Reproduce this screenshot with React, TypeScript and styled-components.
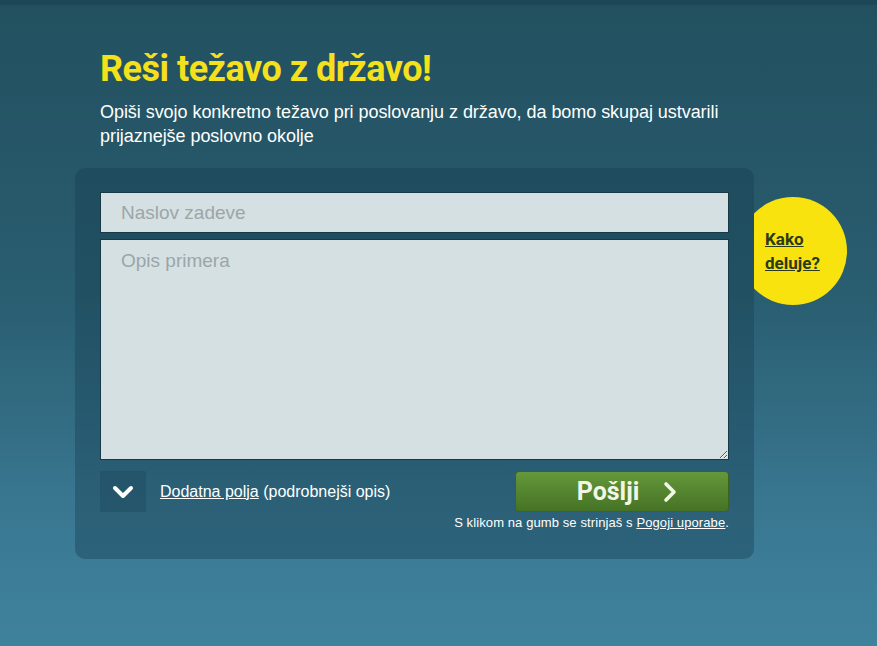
import React from "react";
import styled, { createGlobalStyle } from "styled-components";

const GlobalStyle = createGlobalStyle`
  html, body {
    margin: 0;
    padding: 0;
  }
  body {
    font-family: "Liberation Sans", Arial, sans-serif;
  }
`;

const ChevronDown = () => (
  <svg width="22" height="14" viewBox="0 0 22 14">
    <path
      d="M3 3 L11 11 L19 3"
      fill="none"
      stroke="#ffffff"
      strokeWidth="4"
      strokeLinecap="round"
      strokeLinejoin="round"
    />
  </svg>
);

const ChevronRight = () => (
  <svg width="14" height="22" viewBox="0 0 14 22">
    <path
      d="M3 3 L11 11 L3 19"
      fill="none"
      stroke="#f2f6e6"
      strokeWidth="3.6"
      strokeLinecap="round"
      strokeLinejoin="round"
    />
  </svg>
);

const App = () => {
  return (
    <>
      <GlobalStyle />
      <Page>
        <TopStrip />
        <Content>
          <Header>
            <Title>Reši težavo z državo!</Title>
            <Lead>
              Opiši svojo konkretno težavo pri poslovanju z državo, da bomo
              skupaj ustvarili prijaznejše poslovno okolje
            </Lead>
          </Header>
          <FormRow>
            <Panel>
              <TitleInput placeholder="Naslov zadeve" />
              <DescArea placeholder="Opis primera" />
              <Actions>
                <MoreFields>
                  <ToggleButton type="button">
                    <ChevronDown />
                  </ToggleButton>
                  <MoreText>
                    <a href="#">Dodatna polja</a> (podrobnejši opis)
                  </MoreText>
                </MoreFields>
                <SubmitBox>
                  <SubmitButton type="button">
                    Pošlji
                    <ChevronRight />
                  </SubmitButton>
                  <Terms>
                    S klikom na gumb se strinjaš s <a href="#">Pogoji uporabe</a>.
                  </Terms>
                </SubmitBox>
              </Actions>
            </Panel>
            <HelpBubble>
              <a href="#">
                Kako
                <br />
                deluje?
              </a>
            </HelpBubble>
          </FormRow>
        </Content>
      </Page>
    </>
  );
};

export default App;

const Page = styled.div`
  position: relative;
  width: 100%;
  min-height: 646px;
  overflow: hidden;
  background: linear-gradient(
    180deg,
    #22505f 0%,
    #295d70 45%,
    #3a7892 80%,
    #3f829c 100%
  );
`;

const TopStrip = styled.div`
  height: 5px;
  background: #1d4656;
`;

const Content = styled.div`
  padding: 41px 0 0 75px;
`;

const Header = styled.div`
  padding-left: 25px;
`;

const Title = styled.h1`
  margin: 0;
  color: #f4e11b;
  font-family: Roboto, "Liberation Sans", sans-serif;
  font-weight: 700;
  font-size: 36px;
  line-height: 46px;
  letter-spacing: -0.5px;
`;

const Lead = styled.p`
  margin: 8px 0 0;
  width: 640px;
  color: #ffffff;
  font-size: 18px;
  line-height: 24px;
  letter-spacing: -0.05px;
`;

const FormRow = styled.div`
  display: flex;
  align-items: flex-start;
  margin-top: 20px;
`;

const Panel = styled.div`
  box-sizing: border-box;
  width: 679px;
  height: 391px;
  padding: 24px 25px 0;
  border-radius: 10px;
  background: rgba(20, 60, 78, 0.38);
  display: flex;
  flex-direction: column;
`;

const fieldBase = `
  box-sizing: border-box;
  width: 100%;
  margin: 0;
  border: 1px solid #183a48;
  background: #d5e0e3;
  color: #333;
  font-family: "Liberation Sans", Arial, sans-serif;
  font-size: 19px;
  padding: 0 20px;
  outline: none;
  &::placeholder {
    color: #9ba6a9;
  }
`;

const TitleInput = styled.input`
  ${fieldBase}
  height: 41px;
`;

const DescArea = styled.textarea`
  ${fieldBase}
  height: 221px;
  margin-top: 6px;
  padding-top: 10px;
  resize: vertical;
  display: block;
`;

const Actions = styled.div`
  display: flex;
  justify-content: space-between;
  align-items: flex-start;
  margin-top: 11px;
`;

const MoreFields = styled.div`
  display: flex;
  align-items: center;
  gap: 14px;
`;

const ToggleButton = styled.button`
  width: 46px;
  height: 41px;
  border: 0;
  padding: 0;
  border-radius: 2px;
  background: rgba(20, 60, 78, 0.28);
  display: flex;
  align-items: center;
  justify-content: center;
  cursor: pointer;
`;

const MoreText = styled.span`
  color: #ffffff;
  font-size: 16px;

  a {
    color: #ffffff;
    text-decoration: underline;
  }
`;

const SubmitBox = styled.div`
  display: flex;
  flex-direction: column;
  align-items: flex-end;
`;

const SubmitButton = styled.button`
  box-sizing: border-box;
  width: 214px;
  height: 41px;
  border: 1px solid #3b6320;
  border-radius: 4px;
  background: linear-gradient(180deg, #65983b 0%, #54852f 50%, #467326 100%);
  color: #f2f6e6;
  font-family: Roboto, "Liberation Sans", sans-serif;
  font-weight: 700;
  font-size: 25px;
  display: flex;
  align-items: center;
  justify-content: center;
  gap: 24px;
  padding: 0 0 0 10px;
  cursor: pointer;
`;

const Terms = styled.div`
  margin-top: 2px;
  color: #ffffff;
  font-size: 13px;
  line-height: 17px;
  letter-spacing: 0.1px;

  a {
    color: #ffffff;
    text-decoration: underline;
  }
`;

const HelpBubble = styled.div`
  width: 93px;
  height: 108px;
  margin-top: 29px;
  background: #f8e30e;
  clip-path: circle(54px at 39px 54px);
  display: flex;
  align-items: center;
  box-sizing: border-box;
  padding-left: 11px;

  a {
    color: #2b3a1c;
    font-family: Roboto, "Liberation Sans", sans-serif;
    font-weight: 700;
    font-size: 17px;
    line-height: 24px;
    text-decoration: underline;
  }
`;
